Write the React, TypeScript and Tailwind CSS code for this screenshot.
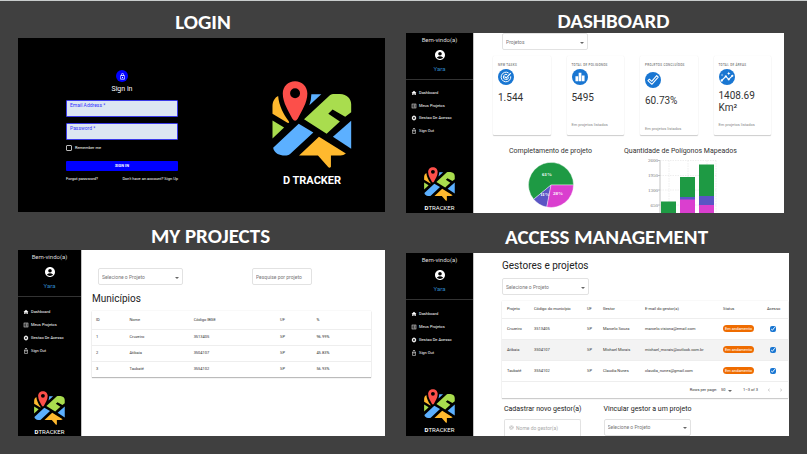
import type { ReactNode } from "react";
import {
  MdAccountCircle,
  MdAlternateEmail,
  MdChevronLeft,
  MdChevronRight,
  MdHome,
  MdInsights,
  MdListAlt,
  MdLockOutline,
  MdSettings,
} from "react-icons/md";

function MapLogo({ className }: { className: string }) {
  return (
    <svg viewBox="30 32 240 262" className={className} role="img" aria-label="D Tracker">
      <path fill="#ffb92e" d="M48 77C38 82 31 93 31 108V131L76 158Q84 160 80 153C64 132 51 107 48 77Z" />
      <path fill="#a9dd4e" d="M31 151L66 172L31 205Z" />
      <path fill="#5cb0ff" d="M148 72H178L142 105Q148 88 148 72Z" />
      <path fill="#a9dd4e" d="M126 147L203 76Q207 72 213 71H234C256 72 268 86 268 102V126L250 140L212 118L199 131L234 154L194 191Z" />
      <path fill="#5cb0ff" d="M268 152V236L213 200Z" />
      <path fill="#5cb0ff" d="M110 161L154 187L84 252Q80 256 73 256H62C46 254 36 247 33 233Z" />
      <path fill="#ffb92e" d="M171 200L252 250Q245 256 236 256H207V290Q203 296 198 290L168 256H111Z" />
      <path
        fill="#fc4f4a"
        fillRule="evenodd"
        d="M99 33C78 33 62 49 62 70C62 98 80 124 91 146Q99 158 107 146C118 124 136 98 136 70C136 49 120 33 99 33ZM99 54A15 15 0 1 1 99 84A15 15 0 1 1 99 54Z"
      />
    </svg>
  );
}

function TargetCheckIcon({ className }: { className?: string }) {
  return (
    <svg viewBox="0 0 16 16" className={className} fill="none" stroke="currentColor" strokeWidth="1.1" aria-hidden="true">
      <path d="M11 3.4A5.5 5.5 0 1 0 13.4 7.2" />
      <path d="M9.4 5.3A3 3 0 1 0 11 8.4" />
      <path d="M6.3 7.4L8.2 9.2L13.4 3.6" strokeWidth="1.3" />
    </svg>
  );
}

function BarsIcon({ className }: { className?: string }) {
  return (
    <svg viewBox="0 0 16 16" className={className} fill="currentColor" aria-hidden="true">
      <path d="M2.8 7H5.9V12.8H2.8ZM6.5 3.2H9.6V12.8H6.5ZM10.2 6.2H13.2V12.8H10.2Z" />
    </svg>
  );
}

function OutlinedCheckIcon({ className }: { className?: string }) {
  return (
    <svg viewBox="0 0 16 16" className={className} fill="none" stroke="currentColor" strokeWidth="1.2" strokeLinejoin="round" aria-hidden="true">
      <path d="M2.2 8.8L3.9 7.1L6.5 9.5L12.2 3L14 4.7L6.7 12.9Z" />
    </svg>
  );
}

function Caret() {
  return (
    <svg viewBox="0 0 4 2" className="pointer-events-none absolute right-[4px] top-1/2 h-[2px] w-[4px]" aria-hidden="true">
      <path d="M0 0H4L2 2Z" fill="#666" />
    </svg>
  );
}

function ProjectSelect({ label, className }: { label: string; className: string }) {
  return (
    <div className={`relative ${className}`}>
      <select
        aria-label={label}
        className="block h-[17px] w-full appearance-none rounded-[2px] border border-[#e2e2e2] bg-white pl-[3px] text-[5px] leading-[8px] text-[#777]"
      >
        <option>{label}</option>
      </select>
      <Caret />
    </div>
  );
}

function SectionTitle({ children, className }: { children: ReactNode; className: string }) {
  return (
    <h2 className={`text-center font-[Carlito,Lato,sans-serif] text-[21px] font-bold leading-[24px] text-white ${className}`}>
      {children}
    </h2>
  );
}

const links = [
  { icon: MdHome, text: "Dashboard" },
  { icon: MdListAlt, text: "Meus Projetos" },
  { icon: MdSettings, text: "Gestao De Acesso" },
  { icon: MdLockOutline, text: "Sign Out" },
];

function Sidebar({ className, navClass }: { className: string; navClass: string }) {
  return (
    <aside className={`flex shrink-0 flex-col items-center border-r border-[#c4c4c4] bg-black text-white ${className}`}>
      <p className="mt-[3px] text-[6px] leading-[8px] text-[#ddd]">Bem-vindo(a)</p>
      <MdAccountCircle className="mt-[5px] size-[12px]" />
      <p className="mt-[4px] text-[6px] leading-[8px] text-[#2f86c5]">Yara</p>
      <hr className="mt-[6px] w-full border-[#333]" />
      <nav className={`grid w-full grid-rows-4 pl-[5px] ${navClass}`}>
        {links.map(({ icon: Icon, text }) => (
          <a key={text} href="#" className="flex items-center gap-[2px] text-[4px] leading-[8px] text-white">
            <Icon className="size-[6px]" />
            {text}
          </a>
        ))}
      </nav>
      <div className="mt-auto flex flex-col items-center">
        <MapLogo className="h-[34px] w-[31px]" />
        <p className="mt-[3px] text-[6px] leading-[8px]">
          <span className="font-bold">D</span>TRACKER
        </p>
      </div>
    </aside>
  );
}

function LoginPanel() {
  return (
    <section className="flex justify-between bg-black pb-[24px] pl-[48px] pr-[33px] pt-[32px] text-white">
      <form className="flex w-[112px] flex-col">
        <span className="flex size-[12px] items-center justify-center self-center rounded-full bg-[#0000ff]">
          <MdLockOutline className="size-[7px]" />
        </span>
        <h3 className="mt-[2px] text-center text-[7px] leading-[10px]">Sign in</h3>
        <label className="mt-[6px] flex h-[17px] flex-col rounded-[1px] border border-[#3a3ae8] bg-[#dce6f2] px-[3px] text-[5px] leading-[8px] text-[#3434ff]">
          Email Address *
          <input type="email" className="h-[6px] w-full bg-transparent outline-none" />
        </label>
        <label className="mt-[6px] flex h-[17px] flex-col rounded-[1px] border border-[#3a3ae8] bg-[#dce6f2] px-[3px] text-[5px] leading-[8px] text-[#3434ff]">
          Password *
          <input type="password" className="h-[6px] w-full bg-transparent outline-none" />
        </label>
        <label className="mt-[4px] flex items-center gap-[3px] text-[4px] leading-[8px]">
          <input type="checkbox" className="size-[6px] appearance-none rounded-[1px] border border-[#bbb]" />
          Remember me
        </label>
        <button type="button" className="mt-[9px] h-[10px] rounded-[1px] bg-[#0000ff] text-[4px] font-bold leading-[10px]">
          SIGN IN
        </button>
        <div className="mt-[4px] flex justify-between text-[4px] leading-[8px]">
          <a href="#">Forgot password?</a>
          <a href="#">Don't have an account? Sign Up</a>
        </div>
      </form>
      <div className="flex flex-col items-center pt-[11px]">
        <MapLogo className="h-[87px] w-[80px]" />
        <p className="mt-[6px] text-[11px] font-bold leading-[14px]">D TRACKER</p>
      </div>
    </section>
  );
}

const stats = [
  { label: "NEW TASKS", icon: TargetCheckIcon, value: "1.544", note: "", iconGap: "mt-[1px]", valueGap: "mt-[7px]", noteGap: "mb-[7px]" },
  { label: "TOTAL DE POLIGONOS", icon: BarsIcon, value: "5495", note: "Em projetos listados", iconGap: "mt-[1px]", valueGap: "mt-[7px]", noteGap: "mb-[7px]" },
  { label: "PROJETOS CONCLUÍDOS", icon: OutlinedCheckIcon, value: "60.73%", note: "Em projetos listados", iconGap: "mt-[4px]", valueGap: "mt-[7px]", noteGap: "mb-[3px]" },
  { label: "TOTAL DE ÁREAS", icon: MdInsights, value: "1408.69 Km²", note: "Em projetos listados", iconGap: "mt-[1px]", valueGap: "mt-[5px]", noteGap: "mb-[7px]" },
];

function PieChart() {
  return (
    <svg viewBox="0 0 46 52" className="h-[52px] w-[46px]" role="img" aria-label="Completamento de projeto">
      <g stroke="#fff" strokeWidth="0.4">
        <path d="M23 24H45.5A22.5 22.5 0 1 0 5.7 38.3Z" fill="#1e9a44" />
        <path d="M23 24L5.7 38.3A22.5 22.5 0 0 0 18.8 46.1Z" fill="#5a55c4" />
        <path d="M23 24L18.8 46.1A22.5 22.5 0 0 0 45.5 24Z" fill="#da3fcf" />
      </g>
      <g className="font-['Liberation_Serif',serif] text-[5px] font-bold" fill="#fff" textAnchor="middle">
        <text x="19" y="15">61%</text>
        <text x="17" y="35">11%</text>
        <text x="30" y="34">28%</text>
      </g>
    </svg>
  );
}

function BarChart() {
  return (
    <svg viewBox="0 0 72 55" className="h-[55px] w-[72px]" role="img" aria-label="Quantidade de Polígonos Mapeados">
      <g stroke="#ddd" strokeWidth="0.5" strokeDasharray="1.5 1" fill="none">
        <path d="M14 2.5H70M14 17.5H70M14 32H70M14 47H70M23 2.5V55M42 2.5V55M61 2.5V55M70 2.5V55" />
      </g>
      <path d="M14 2.5V55M12 2.5H14M12 17.5H14M12 32H14M12 47H14" stroke="#aaa" strokeWidth="0.7" />
      <g className="font-['Liberation_Serif',serif] text-[5px]" fill="#777" textAnchor="end">
        <text x="12" y="4">2600</text>
        <text x="12" y="19">1950</text>
        <text x="12" y="34">1300</text>
        <text x="12" y="49">650</text>
      </g>
      <path d="M15 43.5H30V55H15ZM34 19H49V39H34ZM53 6.5H68V38H53Z" fill="#1e9a44" />
      <path d="M34 39H49V42H34ZM53 38H68V47H53Z" fill="#5a55c4" />
      <path d="M34 41.5H49V55H34ZM53 47H68V55H53Z" fill="#da3fcf" />
    </svg>
  );
}

function DashboardPanel() {
  return (
    <section className="mr-[5px] flex bg-white">
      <Sidebar className="w-[68px] pb-px" navClass="mt-[7px] h-[50px]" />
      <div className="min-w-0 flex-1 text-[#333]">
        <ProjectSelect label="Projetos" className="ml-[28px] w-[86px]" />
        <div className="ml-[19px] mr-[13px] mt-[6px] grid grid-cols-4 gap-[16px]">
          {stats.map(({ label, icon: Icon, value, note, iconGap, valueGap, noteGap }) => (
            <article key={label} className="flex h-[79px] flex-col rounded-[1px] pl-[5px] shadow-[0_1px_1px_#ccc,0_0_1px_#e4e4e4]">
              <h4 className="mt-[6px] whitespace-nowrap text-[3px] font-medium leading-[6px] tracking-widest text-[#777]">{label}</h4>
              <span className={`flex size-[16px] shrink-0 items-center justify-center rounded-full bg-[#1976d2] text-white ${iconGap}`}>
                <Icon className="size-[14px]" />
              </span>
              <p className={`text-[10px] leading-[12px] ${valueGap}`}>{value}</p>
              <p className={`mt-auto whitespace-nowrap text-[4px] leading-[6px] text-[#888] ${noteGap}`}>{note}</p>
            </article>
          ))}
        </div>
        <div className="flex pt-[11px]">
          <div className="flex w-[150px] flex-col items-center gap-[5px] pl-[3px]">
            <h3 className="text-[7px] leading-[10px]">Completamento de projeto</h3>
            <PieChart />
          </div>
          <div className="flex flex-col items-start">
            <h3 className="text-[7px] leading-[10px]">Quantidade de Polígonos Mapeados</h3>
            <div className="pl-[22px] pt-[2px]">
              <BarChart />
            </div>
          </div>
        </div>
      </div>
    </section>
  );
}

const cities = [
  ["1", "Cruzeiro", "3513405", "SP", "96.99%"],
  ["2", "Atibaia", "3504107", "SP", "45.83%"],
  ["3", "Taubaté", "3554102", "SP", "56.93%"],
];

function ProjectsPanel() {
  return (
    <section className="flex bg-white">
      <Sidebar className="w-[64px]" navClass="mt-[8px] h-[53px]" />
      <div className="min-w-0 flex-1 pb-[59px] pl-[10px] pr-[14px] pt-[18px] text-[#333]">
        <div className="flex gap-[69px] pl-[6px]">
          <ProjectSelect label="Selecione o Projeto" className="w-[85px]" />
          <input
            aria-label="Pesquise por projeto"
            placeholder="Pesquise por projeto"
            className="h-[17px] w-[60px] rounded-[2px] border border-[#e2e2e2] px-[3px] text-[5px] leading-[8px] placeholder:text-[#777]"
          />
        </div>
        <h3 className="mt-[7px] text-[10px] leading-[14px] text-[#222]">Municípios</h3>
        <table className="mt-[5px] w-full table-fixed text-left text-[4px] leading-[8px] shadow-[0_1px_1px_#bbb,0_0_1px_#ddd]">
          <thead>
            <tr className="h-[18px] border-b border-[#eee]">
              <th className="w-[12%] pl-[4px] font-normal">ID</th>
              <th className="w-[23%] pl-[4px] font-normal">Nome</th>
              <th className="w-[31%] pl-[4px] font-normal">Código IBGE</th>
              <th className="w-[13%] pl-[4px] font-normal">UF</th>
              <th className="pl-[4px] font-normal">%</th>
            </tr>
          </thead>
          <tbody>
            {cities.map((row) => (
              <tr key={row[0]} className="h-[16px] border-b border-[#eee] last:border-0">
                {row.map((cell, i) => (
                  <td key={i} className="pl-[4px]">{cell}</td>
                ))}
              </tr>
            ))}
          </tbody>
        </table>
      </div>
    </section>
  );
}

const managers = [
  ["Cruzeiro", "3513405", "SP", "Marcelo Souza", "marcelo.visiona@email.com"],
  ["Atibaia", "3504107", "SP", "Michael Morais", "michael_morais@outlook.com.br"],
  ["Taubaté", "3554102", "SP", "Claudia Nunes", "claudia_nunes@gmail.com"],
];

function AccessPanel() {
  return (
    <section className="flex bg-white">
      <Sidebar className="w-[68px] pb-[2px]" navClass="mt-[8px] h-[51px]" />
      <div className="min-w-0 flex-1 pl-[28px] pr-px pt-[6px] text-[#333]">
        <h3 className="text-[10px] leading-[14px] text-[#222]">Gestores e projetos</h3>
        <ProjectSelect label="Selecione o Projeto" className="mt-[5px] w-[87px]" />
        <div className="mt-[6px] shadow-[0_1px_1px_#ccc,0_0_1px_#ddd]">
          <table className="w-full table-fixed whitespace-nowrap text-left text-[4px] leading-[8px]">
            <thead>
              <tr className="h-[17px] border-b border-[#eee]">
                <th className="w-[28px] pl-[5px] font-normal">Projeto</th>
                <th className="w-[53px] pl-[4px] font-normal">Código do município</th>
                <th className="w-[16px] pl-[4px] font-normal">UF</th>
                <th className="w-[42px] pl-[4px] font-normal">Gestor</th>
                <th className="pl-[4px] font-normal">E-mail do gestor(a)</th>
                <th className="w-[44px] pl-[4px] font-normal">Status</th>
                <th className="w-[25px] pl-[4px] font-normal">Acesso</th>
              </tr>
            </thead>
            <tbody>
              {managers.map((row) => (
                <tr key={row[0]} className="h-[21px] border-b border-[#eee] even:bg-[#f3f3f3]">
                  {row.map((cell, i) => (
                    <td key={i} className="pl-[4px] first:pl-[5px]">{cell}</td>
                  ))}
                  <td className="pl-[4px]">
                    <span className="block h-[7px] w-[31px] rounded-full bg-[#ef6c00] text-center text-[4px] leading-[7px] text-white">
                      Em andamento
                    </span>
                  </td>
                  <td className="pl-[7px]">
                    <input type="checkbox" defaultChecked aria-label={`Acesso de ${row[3]}`} className="block size-[6px] accent-[#1976d2]" />
                  </td>
                </tr>
              ))}
            </tbody>
          </table>
          <div className="flex h-[16px] items-center justify-end pr-[4px] text-[4px] leading-[8px]">
            <label className="flex items-center gap-[4px]">
              Rows per page:
              <span className="relative block w-[15px]">
                <select className="block w-full appearance-none bg-transparent">
                  <option>50</option>
                </select>
                <Caret />
              </span>
            </label>
            <span className="ml-[7px]">1–3 of 3</span>
            <button type="button" aria-label="Anterior" className="ml-[8px] text-[#aaa]">
              <MdChevronLeft className="size-[6px]" />
            </button>
            <button type="button" aria-label="Próxima" className="ml-[6px] text-[#aaa]">
              <MdChevronRight className="size-[6px]" />
            </button>
          </div>
        </div>
        <div className="mt-[6px] flex gap-[22px] pl-[2px]">
          <div>
            <h4 className="text-[7px] leading-[10px] text-[#222]">Cadastrar novo gestor(a)</h4>
            <label className="mt-[5px] flex h-[17px] w-[77px] items-center gap-[2px] rounded-t-[2px] border border-b-0 border-[#e2e2e2] pl-[4px] text-[#999]">
              <MdAlternateEmail className="size-[5px] shrink-0" />
              <input
                aria-label="Nome do gestor(a)"
                placeholder="Nome do gestor(a)"
                className="w-full bg-transparent text-[5px] leading-[8px] placeholder:text-[#aaa]"
              />
            </label>
          </div>
          <div>
            <h4 className="text-[7px] leading-[10px] text-[#222]">Vincular gestor a um projeto</h4>
            <ProjectSelect label="Selecione o Projeto" className="mt-[5px] w-[87px]" />
          </div>
        </div>
      </div>
    </section>
  );
}

export default function App() {
  return (
    <main className="grid min-h-screen grid-cols-[367fr_383fr] items-start gap-x-[21px] border-t border-[#c8cccc] bg-[#404040] px-[18px] pb-[18px] font-[Roboto,sans-serif]">
      <div>
        <SectionTitle className="mt-[9px] pl-[3px]">LOGIN</SectionTitle>
        <div className="mt-[4px]">
          <LoginPanel />
        </div>
        <SectionTitle className="mt-[12px] pl-[18px]">MY PROJECTS</SectionTitle>
        <div className="mt-[2px]">
          <ProjectsPanel />
        </div>
      </div>
      <div>
        <SectionTitle className="mt-[8px] pl-[32px]">DASHBOARD</SectionTitle>
        <DashboardPanel />
        <SectionTitle className="mt-[12px] pl-[18px]">ACCESS MANAGEMENT</SectionTitle>
        <div className="mt-[4px]">
          <AccessPanel />
        </div>
      </div>
    </main>
  );
}
